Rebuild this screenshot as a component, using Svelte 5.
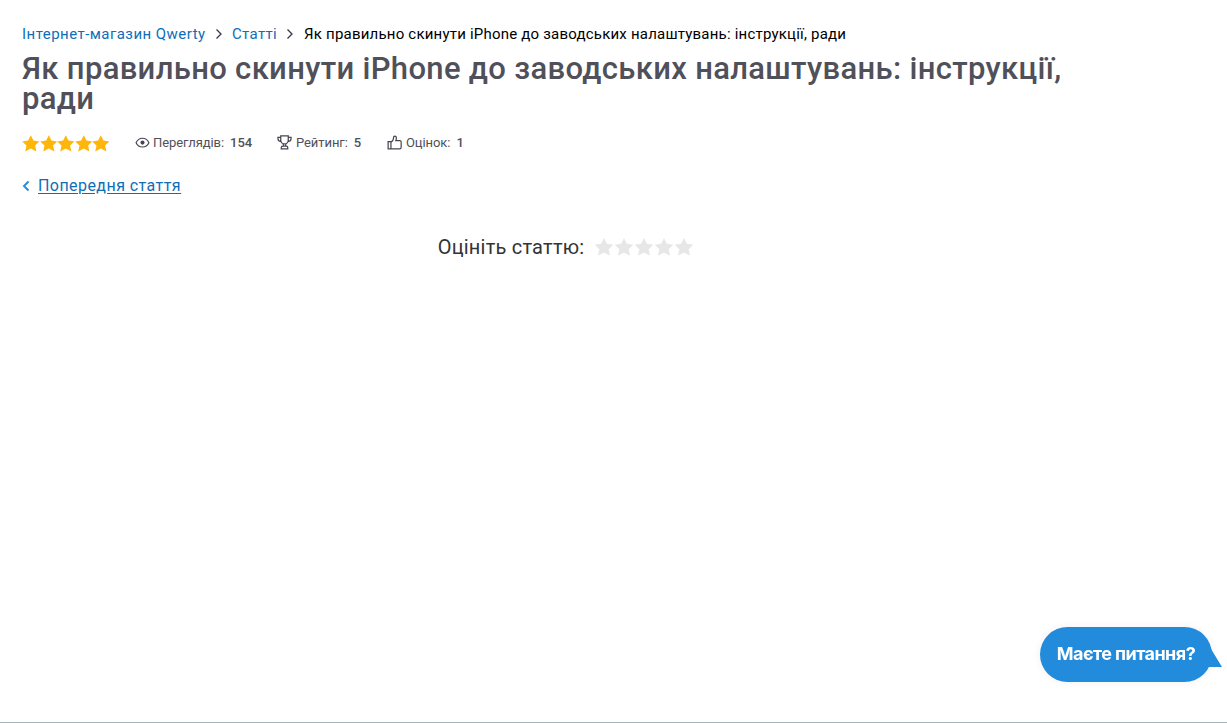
<script lang="ts">
  const title =
    "Як правильно скинути iPhone до заводських налаштувань: інструкції, ради";
  const star =
    "M9 0l2.700 5.500 6.100.9-4.400 4.200 1.300 6.100L9 13.700l-5.700 3L4.600 10.600.2 6.400l6.100-.9z";

  let rating = $state(0);
</script>

<main class="page">
  <nav class="breadcrumbs">
    <a class="shop" href="#shop">Інтернет-магазин Qwerty</a>
    <svg viewBox="0 0 8 12"><path d="M1.500 1.500L6 6l-4.500 4.500" /></svg>
    <a class="section" href="#articles">Статті</a>
    <svg viewBox="0 0 8 12"><path d="M1.500 1.500L6 6l-4.500 4.500" /></svg>
    <span>{title}</span>
  </nav>

  <h1>{title}</h1>

  <div class="info">
    <div class="stars">
      {#each Array(5) as _}
        <svg viewBox="0 0 18 17"><path d={star} /></svg>
      {/each}
    </div>
    <div class="stat views">
      <svg viewBox="0 0 14 14">
        <path d="M1 7.200C2.300 4.400 4.300 3 7 3s4.700 1.400 6 4.200C11.700 10 9.700 11.200 7 11.200S2.300 10 1 7.200z" />
        <circle cx="7" cy="7.100" r="1.900" class="pupil" />
      </svg>
      <span>Переглядів:</span><b>154</b>
    </div>
    <div class="stat score">
      <svg viewBox="0 0 16 16">
        <path d="M4 1h8v4.500a4 4 0 0 1-8 0zM4 2.500H1V4c0 1.800 1.200 2.800 3.300 3M12 2.500h3V4c0 1.800-1.200 2.800-3.300 3M6.700 9.500v2.300M9.300 9.500v2.300M4.500 14.800v-1.300c0-1 .7-1.700 1.700-1.700h3.600c1 0 1.700.7 1.700 1.700v1.300z" />
      </svg>
      <span>Рейтинг:</span><b>5</b>
    </div>
    <div class="stat votes">
      <svg viewBox="0 0 16 16">
        <path d="M1.200 7h3v7.800h-3zM4.200 7.800C6 6.500 7 4.800 7 2.800c0-1 .5-1.700 1.300-1.700 1.200 0 1.700 1 1.700 2.200 0 1-.3 1.900-.6 2.700h4.200c1.100 0 1.500.8 1.500 1.800v5.200c0 1.200-.8 1.800-1.700 1.800H4.200" />
      </svg>
      <span>Оцінок:</span><b>1</b>
    </div>
  </div>

  <a class="previous" href="#previous">
    <svg viewBox="0 0 8 12"><path d="M6.500 1.500L2 6l4.500 4.500" /></svg>
    <span>Попередня стаття</span>
  </a>

  <div class="rate">
    <span>Оцініть статтю:</span>
    <div class="rate-stars">
      {#each Array(5) as _, i}
        <button
          class:active={i < rating}
          aria-label={String(i + 1)}
          onclick={() => (rating = i + 1)}
        >
          <svg viewBox="0 0 18 17"><path d={star} /></svg>
        </button>
      {/each}
    </div>
  </div>
</main>

<button class="chat">
  <span>Маєте питання?</span>
  <svg viewBox="0 0 14 24"><path d="M0 0l14 23H0z" /></svg>
</button>

<style>
  :global(body) {
    background: #fff;
    font-family: Roboto, "Noto Sans", sans-serif;
    overflow: hidden;
  }

  .page {
    box-sizing: border-box;
    height: 723px;
    padding: 24px 23px 0 22px;
    border-bottom: 1px solid #a9b4bb;
  }

  svg {
    display: block;
    flex: none;
  }

  button {
    padding: 0;
    border: 0;
    background: none;
    cursor: pointer;
  }

  .breadcrumbs {
    display: flex;
    align-items: center;
    height: 20px;
    font-size: 15px;
    letter-spacing: 0.21px;
    white-space: nowrap;
    color: #000;
  }

  .breadcrumbs a {
    color: #0e6eb8;
    text-decoration: none;
  }

  .breadcrumbs .shop {
    width: 184px;
    letter-spacing: 0.46px;
  }

  .breadcrumbs .section {
    width: 45px;
    letter-spacing: 0.35px;
  }

  .breadcrumbs svg {
    width: 8px;
    height: 12px;
    margin: 0 9px;
    fill: none;
    stroke: #36364c;
    stroke-width: 1.3;
  }

  .breadcrumbs svg:last-of-type {
    margin-right: 10px;
  }

  h1 {
    width: 1060px;
    margin: 10px 0 0;
    font-size: 31px;
    font-weight: 500;
    line-height: 30px;
    letter-spacing: 0.33px;
    color: #50505a;
  }

  .info {
    display: flex;
    align-items: center;
    height: 20px;
    margin-top: 18px;
    font-size: 13px;
    color: #50505a;
  }

  .stars {
    display: flex;
    width: 113px;
    padding-top: 2px;
  }

  .stars svg {
    width: 17.6px;
    height: 17px;
    fill: #ffb60a;
  }

  .stat {
    display: flex;
    align-items: center;
    white-space: nowrap;
  }

  .stat span {
    letter-spacing: -0.07px;
  }

  .stat svg {
    width: 15px;
    height: 15px;
    margin-right: 4px;
    fill: none;
    stroke: #45454f;
    stroke-width: 1.3;
  }

  .stat .pupil {
    fill: #45454f;
    stroke: none;
  }

  .stat b {
    margin-left: 6px;
    font-weight: 500;
  }

  .views {
    width: 142px;
  }

  .views svg {
    margin-right: 3px;
    stroke-width: 1.1;
  }

  .score {
    width: 110px;
  }

  .previous {
    display: flex;
    align-items: center;
    width: fit-content;
    height: 20px;
    margin-top: 23px;
    font-size: 16px;
    letter-spacing: 0.44px;
    color: #0e6eb8;
    text-decoration: none;
  }

  .previous span {
    text-decoration: underline;
    text-underline-offset: 2px;
  }

  .previous svg {
    width: 8px;
    height: 12px;
    margin: 2px 8px 0 0;
    fill: none;
    stroke: #238bdb;
    stroke-width: 1.9;
  }

  .rate {
    display: flex;
    align-items: center;
    justify-content: center;
    height: 24px;
    margin-top: 40px;
    padding-right: 94px;
    font-size: 20px;
    letter-spacing: 0.22px;
    color: #333;
  }

  .rate-stars {
    display: flex;
    margin-left: 10px;
  }

  .rate-stars svg {
    width: 20px;
    height: 18px;
    fill: #e7e7e7;
  }

  .rate-stars .active svg {
    fill: #ffb60a;
  }

  .chat {
    position: fixed;
    top: 627px;
    left: 1040px;
    width: 172px;
    height: 55px;
    border-radius: 28px;
    background: #238bdb;
    box-shadow: 0 0 10px rgba(0, 0, 0, 0.06);
    font-family: Inter, Roboto, sans-serif;
    font-size: 18px;
    font-weight: 700;
    letter-spacing: -0.55px;
    white-space: nowrap;
    color: #fff;
  }

  .chat span {
    position: relative;
    top: -1px;
  }

  .chat svg {
    position: absolute;
    top: 17px;
    right: -10px;
    width: 14px;
    height: 24px;
    fill: #238bdb;
  }
</style>
